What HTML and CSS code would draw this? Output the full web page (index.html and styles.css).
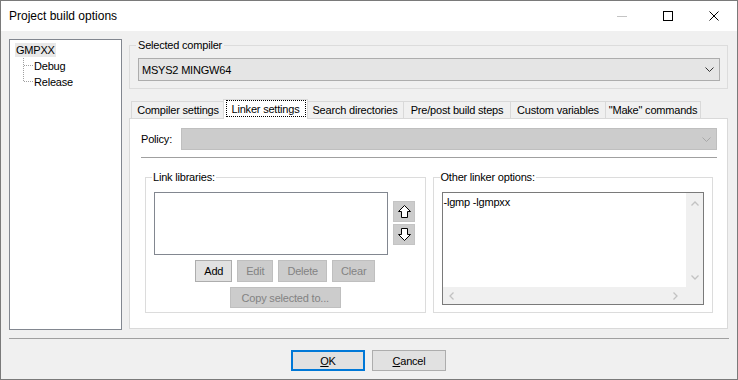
FILE: index.html
```html
<!DOCTYPE html>
<html lang="en">
<head>
    <meta charset="UTF-8">
    <title>Project build options</title>
    <link rel="stylesheet" href="styles.css">
</head>
<body>
    <div class="window">
        <!-- title bar -->
        <div class="titlebar">
            <span class="title">Project build options</span>
            <div class="caption-buttons">
                <span class="caption-btn"><svg width="10" height="1"><rect width="10" height="1" fill="#c4c4c4"/></svg></span>
                <span class="caption-btn"><svg width="10" height="10"><rect x="0.5" y="0.5" width="9" height="9" fill="none" stroke="#000"/></svg></span>
                <span class="caption-btn"><svg width="10" height="10"><path d="M0.5 0.5L9.5 9.5M9.5 0.5L0.5 9.5" stroke="#000" stroke-width="1"/></svg></span>
            </div>
        </div>

        <div class="client">
            <div class="main">
                <!-- target tree -->
                <div class="tree">
                    <div class="tree-root"><span>GMPXX</span></div>
                    <div class="tree-child">
                        <svg class="branch" width="11" height="16"><path d="M0.5 0V16M1 7.5H10" stroke="#a0a0a0" stroke-dasharray="1 1"/></svg>
                        <span>Debug</span>
                    </div>
                    <div class="tree-child">
                        <svg class="branch" width="11" height="16"><path d="M0.5 0V8M1 7.5H10" stroke="#a0a0a0" stroke-dasharray="1 1"/></svg>
                        <span>Release</span>
                    </div>
                </div>

                <div class="right-column">
                    <fieldset class="group compiler-group">
                        <legend>Selected compiler</legend>
                        <div class="combo">
                            <span class="combo-text">MSYS2 MINGW64</span>
                            <svg width="9" height="5"><polyline points="0.5,0.5 4.5,4.5 8.5,0.5" fill="none" stroke="#333"/></svg>
                        </div>
                    </fieldset>

                    <!-- tabs -->
                    <div class="tabs">
                        <div class="tab tab-compiler">Compiler settings</div>
                        <div class="tab tab-linker active"><span>Linker settings</span></div>
                        <div class="tab tab-search">Search directories</div>
                        <div class="tab tab-prepost">Pre/post build steps</div>
                        <div class="tab tab-custom">Custom variables</div>
                        <div class="tab tab-make">"Make" commands</div>
                    </div>

                    <div class="panel">
                        <div class="policy-row">
                            <span class="policy-label">Policy:</span>
                            <div class="combo disabled">
                                <span class="combo-text"></span>
                                <svg width="9" height="5"><polyline points="0.5,0.5 4.5,4.5 8.5,0.5" fill="none" stroke="#a8a8a8"/></svg>
                            </div>
                        </div>
                        <div class="separator"></div>

                        <div class="groups">
                            <fieldset class="group">
                                <legend>Link libraries:</legend>
                                <div class="list-row">
                                    <div class="listbox"></div>
                                    <div class="move-buttons">
                                        <span class="move-btn">
                                            <svg width="13" height="13"><polygon points="6.5,0.5 12.5,6.5 9.5,6.5 9.5,12.5 3.5,12.5 3.5,6.5 0.5,6.5" fill="#fff" stroke="#000"/></svg>
                                        </span>
                                        <span class="move-btn">
                                            <svg width="13" height="13"><polygon points="6.5,12.5 12.5,6.5 9.5,6.5 9.5,0.5 3.5,0.5 3.5,6.5 0.5,6.5" fill="#fff" stroke="#000"/></svg>
                                        </span>
                                    </div>
                                </div>
                                <div class="list-buttons">
                                    <button class="btn btn-add">Add</button>
                                    <button class="btn btn-edit" disabled>Edit</button>
                                    <button class="btn btn-delete" disabled>Delete</button>
                                    <button class="btn btn-clear" disabled>Clear</button>
                                </div>
                                <div class="list-buttons">
                                    <button class="btn btn-copy" disabled>Copy selected to...</button>
                                </div>
                            </fieldset>

                            <fieldset class="group">
                                <legend>Other linker options:</legend>
                                <div class="text-box">
                                    <div class="text-area">-lgmp -lgmpxx</div>
                                    <div class="vscroll">
                                        <svg width="8" height="5"><polyline points="0.5,4.5 4,1 7.5,4.5" fill="none" stroke="#c2c2c2" stroke-width="1.3"/></svg>
                                        <svg width="8" height="5"><polyline points="0.5,0.5 4,4 7.5,0.5" fill="none" stroke="#c2c2c2" stroke-width="1.3"/></svg>
                                    </div>
                                    <div class="hscroll">
                                        <svg width="5" height="8"><polyline points="4.5,0.5 1,4 4.5,7.5" fill="none" stroke="#c2c2c2" stroke-width="1.3"/></svg>
                                        <svg width="5" height="8"><polyline points="0.5,0.5 4,4 0.5,7.5" fill="none" stroke="#c2c2c2" stroke-width="1.3"/></svg>
                                    </div>
                                    <div class="corner"></div>
                                </div>
                            </fieldset>
                        </div>
                    </div>
                </div>
            </div>

            <div class="bottom-separator"></div>
            <div class="dialog-buttons">
                <button class="btn btn-dialog default"><span><u>O</u>K</span></button>
                <button class="btn btn-dialog"><span><u>C</u>ancel</span></button>
            </div>
        </div>
    </div>
</body>
</html>
```

FILE: styles.css
```css
/* base */
* {
    box-sizing: border-box;
}

body {
    margin: 0;
    background: #fff;
    font-family: "Liberation Sans", Arial, sans-serif;
    font-size: 11px;
    color: #000;
}

/* window frame */
.window {
    width: 738px;
    height: 380px;
    border: 1px solid #7a7a7a;
    background: #f0f0f0;
    display: flex;
    flex-direction: column;
}

.titlebar {
    height: 30px;
    flex-shrink: 0;
    background: #fff;
    display: flex;
    align-items: center;
}

.title {
    padding-left: 8px;
    font-size: 12px;
}

.caption-buttons {
    margin-left: auto;
    display: flex;
    height: 100%;
}

.caption-btn {
    width: 46px;
    display: flex;
    align-items: center;
    justify-content: center;
}

.caption-btn svg {
    display: block;
}

/* client area */
.client {
    flex: 1;
    display: flex;
    flex-direction: column;
    padding: 8px 9px 0 8px;
    letter-spacing: -0.2px;
}

.main {
    display: flex;
    gap: 7px;
    height: 291px;
    flex-shrink: 0;
}

/* tree */
.tree {
    width: 113px;
    height: 291px;
    border: 1px solid #828790;
    background: #fff;
    padding: 2px 0 0 5px;
}

.tree-root {
    height: 16px;
    display: flex;
    align-items: center;
}

.tree-root span {
    background: #e8e8e8;
    padding: 0 1px;
    line-height: 14px;
}

.tree-child {
    height: 16px;
    display: flex;
    align-items: center;
}

.branch {
    display: block;
    margin-left: 8px;
    flex-shrink: 0;
}

/* right side */
.right-column {
    flex: 1;
    display: flex;
    flex-direction: column;
    margin-top: -1px;
    height: 291px;
    align-self: flex-start;
}

.group {
    margin: 0;
    min-width: 0;
    border: 1px solid #dcdcdc;
    padding: 6px 7px 7px 8px;
}

.group legend {
    padding: 0 1px;
    margin-left: -2px;
    line-height: 14px;
}

.compiler-group legend {
    padding: 0 2px;
}

.combo {
    height: 23px;
    border: 1px solid #adadad;
    background: #e5e5e5;
    display: flex;
    align-items: center;
    padding: 0 5px 0 3px;
}

.combo-text {
    flex: 1;
}

.combo svg {
    display: block;
}

.combo.disabled {
    height: 22px;
    background: #cccccc;
    border-color: #bfbfbf;
}

/* tabs */
.tabs {
    display: flex;
    align-items: flex-end;
    height: 19px;
    margin-top: 10px;
    padding-left: 2px;
    position: relative;
    z-index: 1;
    flex-shrink: 0;
}

.tab {
    height: 17px;
    border: 1px solid #d9d9d9;
    border-bottom: none;
    background: #f0f0f0;
    margin-right: -1px;
    display: flex;
    align-items: center;
    justify-content: center;
    white-space: nowrap;
}

.tab-compiler { width: 94px; }
.tab-search { width: 98px; }
.tab-prepost { width: 108px; }
.tab-custom { width: 96px; }
.tab-make { width: 96px; }

.tab.active {
    width: 85px;
    height: 20px;
    margin-bottom: -1px;
    margin-left: -1px;
    margin-right: -2px;
    background: #fff;
    align-items: flex-start;
    position: relative;
    z-index: 1;
}

.tab.active span {
    width: 80px;
    height: 17px;
    border: 1px dotted #000;
    display: flex;
    align-items: center;
    justify-content: center;
}

.panel {
    flex: 1;
    border: 1px solid #d9d9d9;
    background: #fff;
    padding: 9px 10px 0 11px;
}

.policy-row {
    display: flex;
    align-items: center;
    height: 22px;
}

.policy-label {
    width: 40px;
}

.policy-row .combo {
    flex: 1;
}

.separator {
    height: 1px;
    background: #a0a0a0;
    margin-top: 7px;
}

.groups {
    display: flex;
    gap: 7px;
    margin: 12px 4px 0 4px;
}

.groups .group {
    flex: 1;
    height: 143px;
    padding: 8px 8px 0 8px;
}

/* link libraries */
.list-row {
    display: flex;
    gap: 5px;
}

.listbox {
    width: 234px;
    height: 63px;
    border: 1px solid #828790;
    background: #fff;
}

.move-buttons {
    display: flex;
    flex-direction: column;
    gap: 2px;
    margin-top: 9px;
}

.move-btn {
    width: 22px;
    height: 21px;
    background: #cccccc;
    border: 1px solid #c4c4c4;
    display: flex;
    align-items: center;
    justify-content: center;
}

.move-btn svg {
    display: block;
}

.list-buttons {
    display: flex;
    justify-content: center;
    gap: 5px;
    margin-top: 5px;
}

.btn {
    height: 22px;
    padding: 0;
    border: 1px solid #adadad;
    background: #e1e1e1;
    font: inherit;
    letter-spacing: inherit;
    color: #000;
    display: flex;
    align-items: center;
    justify-content: center;
}

.btn:disabled {
    background: #cccccc;
    border-color: #bfbfbf;
    color: #838383;
}

.btn-add { width: 37px; }
.btn-edit { width: 36px; }
.btn-delete { width: 49px; }
.btn-clear { width: 43px; }
.btn-copy { width: 111px; height: 21px; }

/* other linker options */
.text-box {
    height: 113px;
    border: 1px solid #7a7a7a;
    background: #f0f0f0;
    display: grid;
    grid-template-columns: 1fr 17px;
    grid-template-rows: 1fr 17px;
}

.text-area {
    background: #fff;
    padding: 2px 0 0 1px;
    line-height: 14px;
}

.vscroll {
    display: flex;
    flex-direction: column;
    justify-content: space-between;
    align-items: center;
    padding: 8px 0 7px 1px;
}

.hscroll {
    display: flex;
    justify-content: space-between;
    align-items: center;
    padding: 0 8px 0 6px;
}

.vscroll svg,
.hscroll svg {
    display: block;
}

/* dialog buttons */
.bottom-separator {
    height: 1px;
    background: #a0a0a0;
    margin-top: 8px;
    margin-right: -1px;
}

.dialog-buttons {
    display: flex;
    justify-content: center;
    gap: 7px;
    margin-top: 11px;
}

.btn-dialog {
    width: 74px;
    height: 21px;
}

.btn-dialog.default {
    border: 2px solid #0078d7;
}
```
